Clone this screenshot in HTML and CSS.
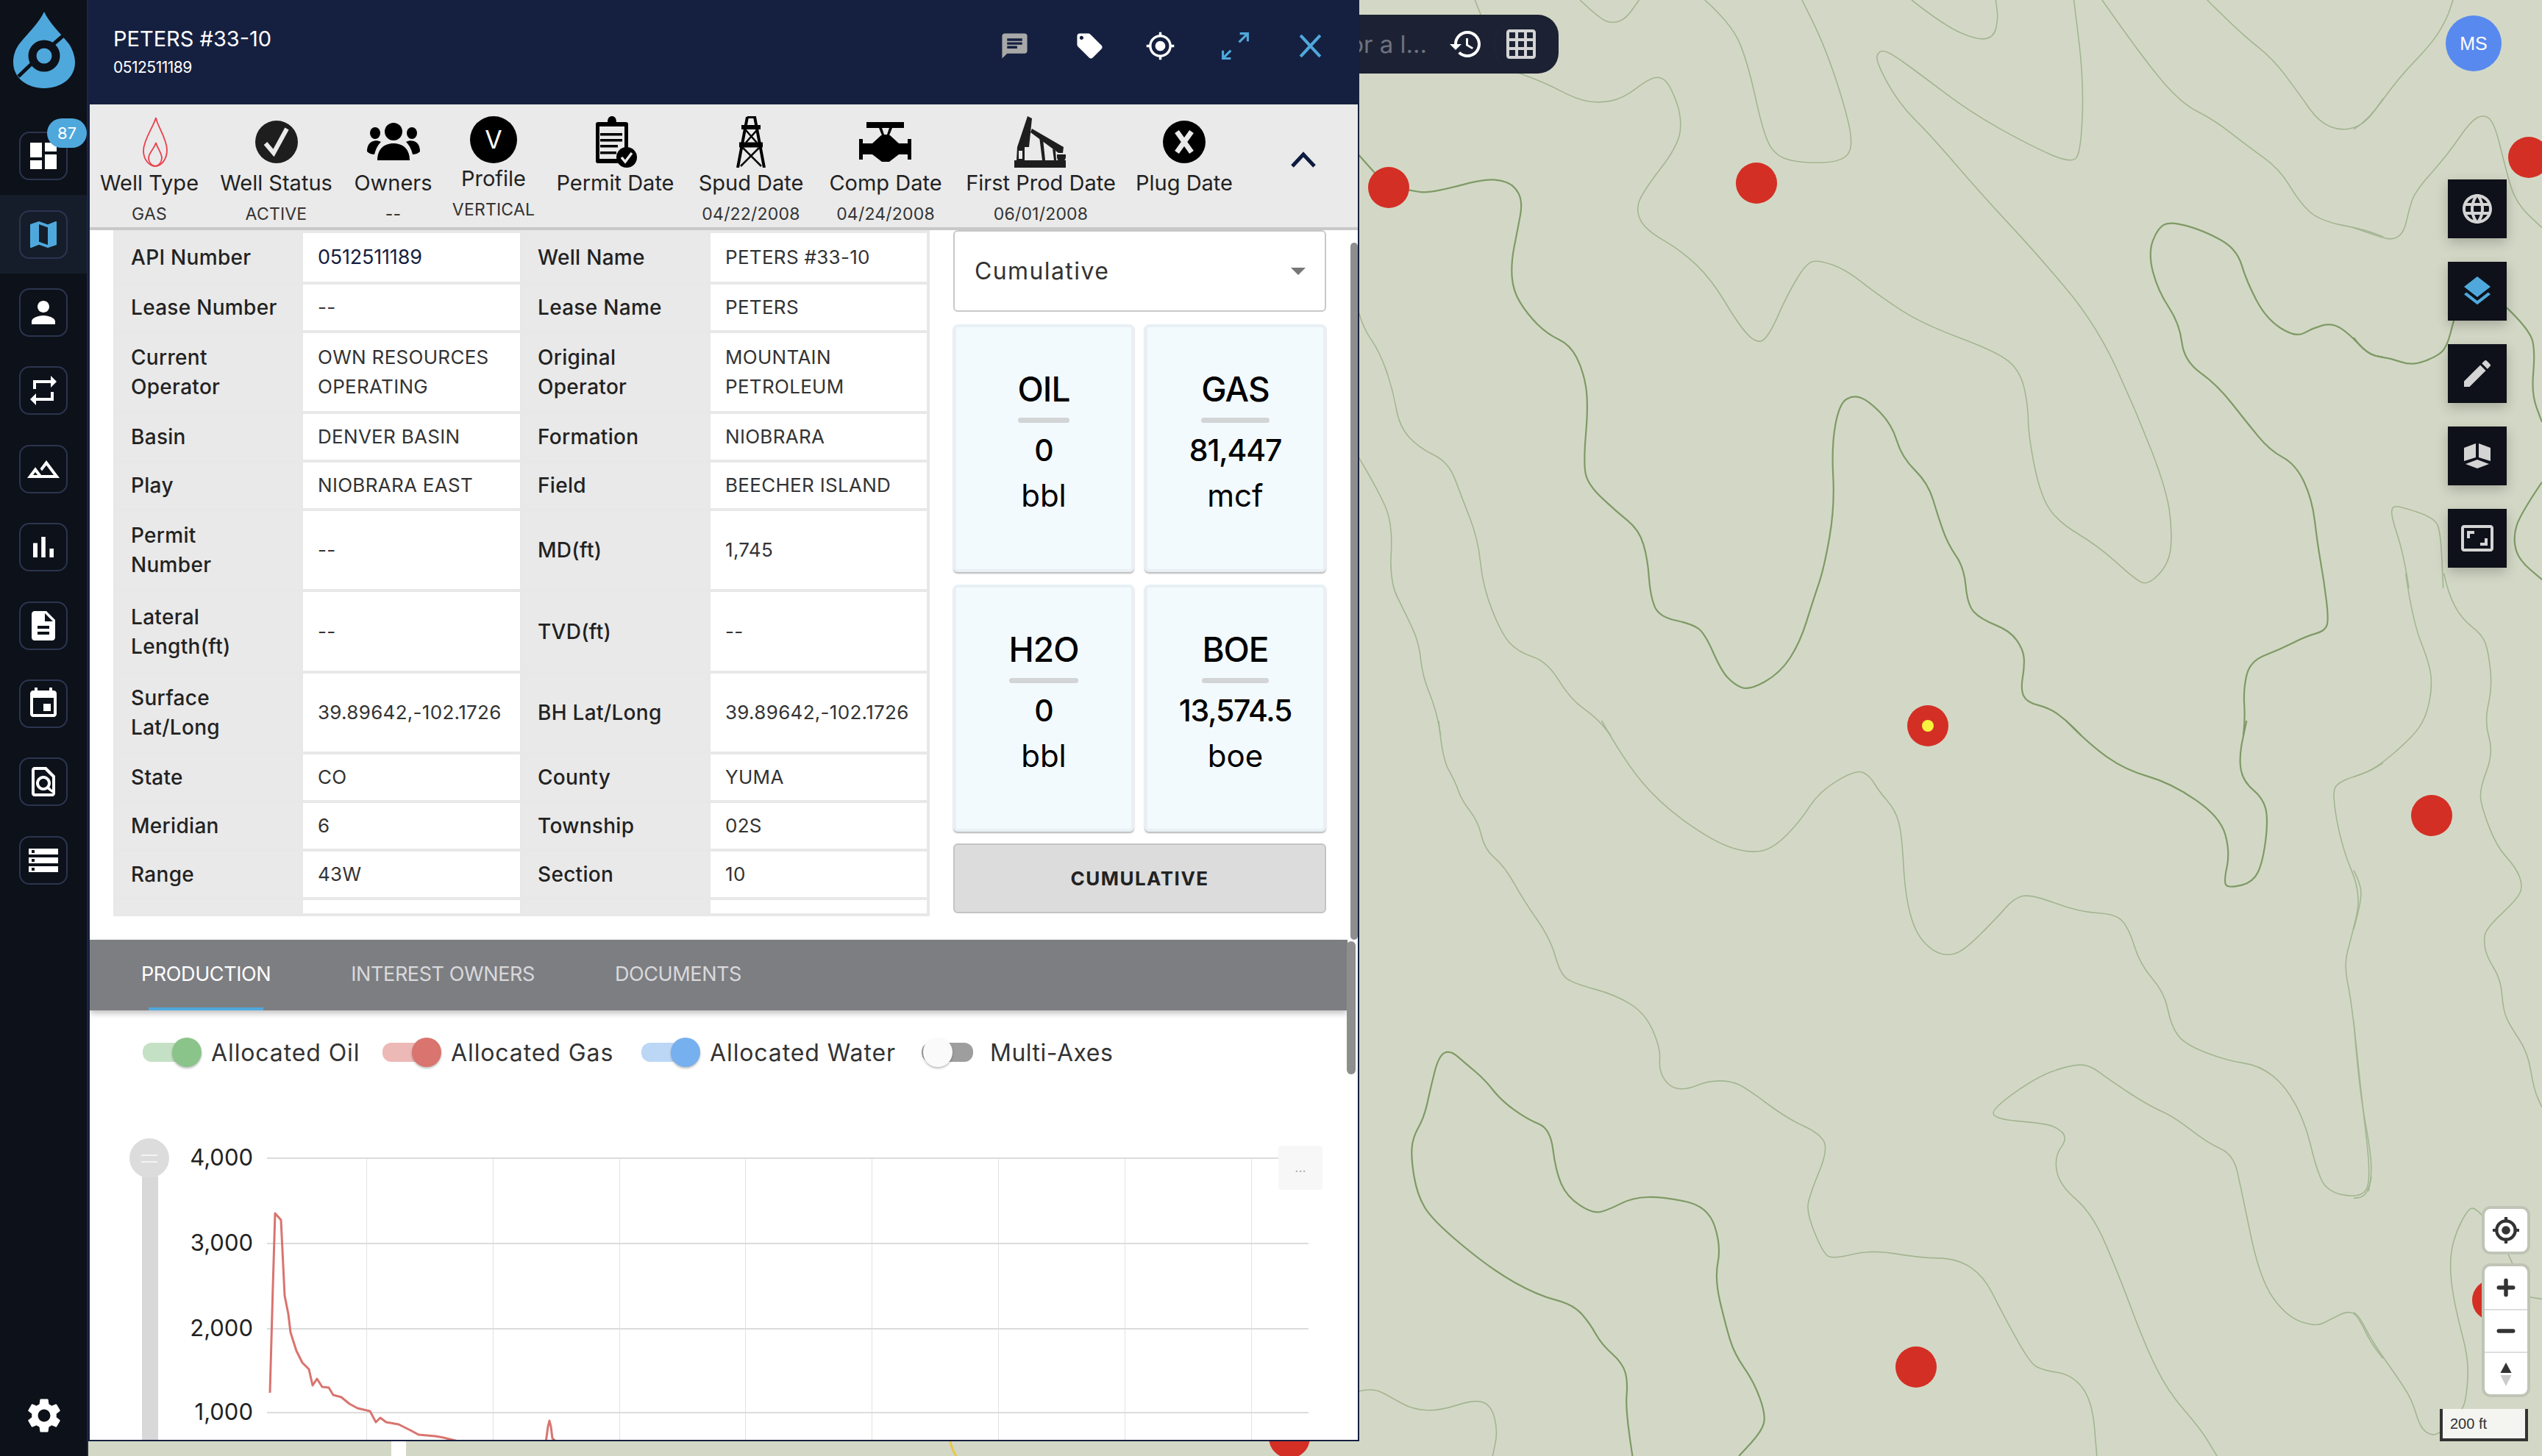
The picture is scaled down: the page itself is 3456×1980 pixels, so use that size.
FILE: index.html
```html
<!DOCTYPE html>
<html lang="en">
<head>
<meta charset="utf-8">
<title>PETERS #33-10</title>
<link rel="stylesheet" href="styles.css">
</head>
<body>
<div class="app">
  <svg class="map" viewBox="0 0 3456 1980" aria-hidden="true">
    <g transform="translate(1840,0) scale(0.8929,0.6378)">
      <polyline class="major" points="8,330 30,365 54,400 85,405 110,412 150,400 190,385 220,382 245,395 258,430 250,490 240,560 243,620 265,670 295,712 330,735 350,790 358,860 350,990 358,1035 400,1090 435,1130 448,1190 452,1270 465,1315 515,1330 535,1350 560,1430 580,1460 603,1472 650,1435 680,1370 700,1280 717,1210 733,1080 728,950 740,860 762,842 785,855 820,905 835,975 875,1030 890,1100 905,1160 930,1210 935,1290 955,1320 1000,1345 1020,1385 1022,1420 1016,1470 1025,1497 1060,1510 1085,1535 1108,1568"/>
      <polyline class="major" points="1355,1568 1358,1535 1355,1470 1365,1410 1410,1385 1450,1357 1480,1345 1485,1320 1478,1240 1468,1160 1460,1065 1435,990 1395,960 1360,900 1315,820 1265,770 1258,690 1225,620 1210,540 1225,485 1245,472 1295,492 1345,530 1360,600 1390,680 1435,720 1460,700 1490,688 1515,710 1545,755 1568,762"/>
      <polyline class="minor" points="8,665 15,700 40,750 60,830 70,910 100,955 145,985 165,1060 190,1150 197,1250 225,1350 250,1390 295,1410 330,1490 370,1530 392,1568"/>
      <polyline class="minor" points="8,975 40,1050 60,1120 55,1240 80,1310 100,1370 105,1440 125,1510 133,1568"/>
      <polyline class="minor" points="250,155 290,175 340,212 375,220 410,210 450,168 470,163 485,190 500,250 495,310 440,410 430,450 445,490 500,535 545,595 590,700 617,735 635,710 660,630 690,560 710,555 750,575 800,630 865,690 980,750 1015,790 1027,860 1028,930 1045,1050 1070,1110 1135,1165 1190,1235 1210,1248 1240,1205 1247,1150 1240,1050 1190,870 1130,690 1040,540 960,420 880,290 830,220 795,130 800,108 815,110 860,155 940,240 1030,310 1095,350 1108,320 1112,170 1097,0"/>
      <polyline class="minor" points="535,0 575,50 600,130 625,290 645,335 685,348 745,345 762,310 745,210 715,90 683,0"/>
      <polyline class="minor" points="345,0 375,40 395,50 415,40 435,0"/>
      <polyline class="minor" points="850,0 900,55 950,85 975,80 982,40 978,0"/>
      <polyline class="minor" points="185,0 195,35"/>
      <polyline class="minor" points="1140,0 1200,120 1260,220 1310,255 1360,310 1410,360 1440,430 1470,470 1540,490 1568,505"/>
      <polyline class="minor" points="1300,0 1350,70 1400,125 1440,200 1470,260 1505,280 1540,265 1568,210"/>
    </g>
    <g transform="translate(1840,980) scale(0.8929,0.6378)">
      <polyline class="major" points="1085,0 1120,50 1175,105 1245,133 1320,205 1335,280 1325,345 1333,357 1370,345 1385,300 1393,210 1385,165 1355,130 1348,80 1360,0"/>
      <polyline class="major" points="425,1568 414,1470 418,1410 410,1370 378,1330 360,1285 335,1245 280,1225 210,1170 120,1065 97,1010 88,935 90,890 108,845 118,780 130,715 147,702 170,730 200,765 225,810 265,850 300,870 308,960 325,1015 365,1052 390,1042 425,1017 470,1015 540,1035 560,1120 550,1190 567,1290 580,1350 610,1410 628,1480 622,1515 587,1568"/>
      <polyline class="minor" points="8,1430 30,1422 60,1445 90,1468 130,1472 185,1447 210,1460 220,1515 212,1568"/>
      <polyline class="minor" points="130,0 135,80 155,130 165,170 190,215 200,275 230,310 260,385 300,465 315,540 335,560 400,585 445,625 468,700 465,745 480,780 505,788 540,768 575,768 600,785 660,848 710,880 723,915 695,1010 690,1050 715,1135 730,1148 790,1128 860,1145 920,1147 960,1185 985,1255 1030,1370 1050,1385 1095,1395 1125,1450 1132,1568"/>
      <polyline class="minor" points="378,0 410,80 465,175 550,260 605,283 640,272 680,215 710,150 765,105 785,115 800,150 825,190 835,240 840,370 855,450 880,490 905,502 930,490 980,420 1005,380 1030,369 1105,408 1160,412 1180,440 1198,520 1235,580 1245,650 1265,690 1330,725 1380,735 1420,780 1450,860 1465,950 1482,1005 1535,1018 1550,980 1535,800 1520,600 1508,520 1520,460 1535,370 1505,270 1490,155 1500,130 1545,110 1568,90"/>
      <polyline class="minor" points="1568,1360 1550,1330 1530,1270 1515,1258 1490,1275 1465,1293 1420,1270 1380,1190 1352,1000 1340,925 1300,900 1250,845 1210,820 1150,765 1120,733 1090,735 1040,760 970,830 980,850 1040,857 1070,865 1088,890 1067,930 1075,990 1125,1050 1165,1180 1205,1330 1240,1430 1290,1510 1315,1568"/>
    </g>
    <g transform="translate(3200,0) scale(0.3333,0.5102)">
      <polyline class="minor" points="0,345 60,320 180,210 320,115 380,50 405,0"/>
      <polyline class="minor" points="0,607 100,630 160,640 205,620 225,560 250,510 380,415 480,320 535,305 575,330 620,450 660,540 768,607"/>
      <polyline class="major" points="0,900 50,945 150,955 240,975 340,950 380,925 410,850"/>
      <polyline class="major" points="624,820 720,880 740,940 725,1050 768,1125"/>
      <polyline class="major" points="768,1285 680,1370 650,1430 670,1490 768,1545"/>
      <polyline class="minor" points="225,1568 205,1480 155,1380 155,1350 190,1350 330,1380 355,1420 365,1568"/>
    </g>
    <g transform="translate(3200,780) scale(0.3333,0.5357)">
      <polyline class="minor" points="212,0 240,120 310,230 320,290 295,365 240,415 90,495 0,516"/>
      <polyline class="minor" points="368,0 385,50 440,115 525,155 550,200 565,290 533,375 570,455 515,545 520,590 582,692 660,745 690,790 670,825 540,900 530,935 545,975 600,1030 610,1110 640,1150 710,1215 735,1310 768,1355"/>
      <polyline class="minor" points="0,753 30,790 30,830 0,903"/>
      <polyline class="minor" points="0,1135 20,1300 70,1470 72,1530 60,1568"/>
    </g>
    <g transform="translate(3200,1600) scale(0.3333,0.3333)">
      <polyline class="minor" points="0,88 40,88 65,40 72,0"/>
      <polyline class="minor" points="530,165 495,125 465,135 420,220 395,310 395,420 420,560 470,750 460,900 440,960 350,1050 310,1055 270,1020 240,920 200,850 80,680 25,575 0,553"/>
      <polyline class="minor" points="625,305 652,365"/>
      <polyline class="minor" points="708,490 768,500"/>
    </g>
    <line class="road" x1="542" y1="1950" x2="542" y2="1980"/>
    <path class="yellow" d="M1290 1950 q2 18 10 30"/>
    <circle class="well" cx="1888" cy="255" r="28"/>
    <circle class="well" cx="2388" cy="249" r="28"/>
    <circle class="well" cx="2621" cy="987" r="28"/>
    <circle class="hit" cx="2621" cy="987" r="8"/>
    <circle class="well" cx="3306" cy="1109" r="28"/>
    <circle class="well" cx="2605" cy="1859" r="28"/>
    <circle class="well" cx="3438" cy="214" r="28"/>
    <circle class="well" cx="3389" cy="1768" r="28"/>
    <circle class="well" cx="1753" cy="1955" r="28"/>
  </svg>

  <div class="search">
    <span class="search-text">Search for a l...</span>
    <svg class="si" viewBox="0 0 24 24" fill="#fff"><path d="M13 3c-4.970 0-9 4.030-9 9H1l3.890 3.890.070.140L9 12H6c0-3.870 3.130-7 7-7s7 3.130 7 7-3.130 7-7 7c-1.930 0-3.680-.790-4.940-2.060l-1.420 1.420C8.270 19.990 10.510 21 13 21c4.970 0 9-4.030 9-9s-4.030-9-9-9zm-1 5v5l4.280 2.540.720-1.210-3.500-2.080V8H12z"/></svg>
    <span class="search-end"><svg class="si" viewBox="0 0 24 24" fill="#d4d4d4"><path d="M20 2H4c-1.100 0-2 .900-2 2v16c0 1.100.900 2 2 2h16c1.100 0 2-.900 2-2V4c0-1.100-.900-2-2-2zM8 20H4v-4h4v4zm0-6H4v-4h4v4zm0-6H4V4h4v4zm6 12h-4v-4h4v4zm0-6h-4v-4h4v4zm0-6h-4V4h4v4zm6 12h-4v-4h4v4zm0-6h-4v-4h4v4zm0-6h-4V4h4v4z"/></svg></span>
  </div>

  <nav class="sidebar">
    <div class="logo">
      <svg viewBox="0 0 84 104" width="84" height="104" aria-hidden="true">
        <path fill="#4fa8dc" d="M42 0C49 15 62 27 76 44C81 52 84 61 84 69C84 90 65 104 42 104C19 104 0 90 0 69C0 59 3 51 8 44C22 27 35 15 42 0Z"/>
        <path fill="none" stroke="#0d1119" stroke-width="5" d="M7 88L34 62M50 48L80 22"/>
        <circle cx="42" cy="60" r="16" fill="#4fa8dc" stroke="#0d1119" stroke-width="11"/>
      </svg>
    </div>
    <div class="nav-list">
      <div class="nav-row"><span class="nav-btn"><span class="badge">87</span><svg viewBox="0 0 24 24"><path d="M3 13h8V3H3v10zm0 8h8v-6H3v6zm10 0h8V11h-8v10zm0-18v6h8V3h-8z"/></svg></span></div>
      <div class="nav-row nav-active"><span class="nav-btn"><svg viewBox="0 0 24 24"><path d="M20.5 3l-.16.03L15 5.1 9 3 3.36 4.9c-.21.07-.36.25-.36.48V20.5c0 .28.22.5.5.5l.16-.03L9 18.9l6 2.1 5.64-1.9c.21-.07.36-.25.36-.48V3.5c0-.28-.22-.5-.5-.5zM15 19l-6-2.11V5l6 2.11V19z"/></svg></span></div>
      <div class="nav-row"><span class="nav-btn"><svg viewBox="0 0 24 24"><path d="M12 12c2.21 0 4-1.79 4-4s-1.79-4-4-4-4 1.79-4 4 1.79 4 4 4zm0 2c-2.67 0-8 1.34-8 4v2h16v-2c0-2.66-5.33-4-8-4z"/></svg></span></div>
      <div class="nav-row"><span class="nav-btn"><svg viewBox="0 0 24 24"><path d="M7 7h10v3l4-4-4-4v3H5v6h2V7zm10 10H7v-3l-4 4 4 4v-3h12v-6h-2v4z"/></svg></span></div>
      <div class="nav-row"><span class="nav-btn"><svg viewBox="0 0 24 24"><path d="M14 6l-4.22 5.63 1.25 1.67L14 9.33 19 16h-8.46l-4.01-5.37L1 18h22L14 6zM5 16l1.52-2.03L8.04 16H5z"/></svg></span></div>
      <div class="nav-row"><span class="nav-btn"><svg viewBox="0 0 24 24"><path d="M5 9.2h3V19H5zM10.6 5h2.8v14h-2.8zm5.6 8H19v6h-2.8z"/></svg></span></div>
      <div class="nav-row"><span class="nav-btn"><svg viewBox="0 0 24 24"><path d="M14 2H6c-1.1 0-1.99.9-1.99 2L4 20c0 1.1.89 2 1.99 2H18c1.1 0 2-.9 2-2V8l-6-6zm2 16H8v-2h8v2zm0-4H8v-2h8v2zm-3-5V3.5L18.5 9H13z"/></svg></span></div>
      <div class="nav-row"><span class="nav-btn"><svg viewBox="0 0 24 24"><path d="M17 12h-5v5h5v-5zM16 1v2H8V1H6v2H5c-1.11 0-1.99.9-1.99 2L3 19c0 1.1.89 2 2 2h14c1.1 0 2-.9 2-2V5c0-1.1-.9-2-2-2h-1V1h-2zm3 18H5V8h14v11z"/></svg></span></div>
      <div class="nav-row"><span class="nav-btn"><svg viewBox="0 0 24 24"><path d="M14 2H6c-1.1 0-1.99.9-1.99 2L4 20c0 1.1.89 2 1.99 2H18c1.1 0 2-.9 2-2V8l-6-6zM6 4h7l5 5v8.58l-1.84-1.84c1.28-1.94 1.07-4.57-.64-6.28C14.55 8.49 13.28 8 12 8c-1.28 0-2.55.49-3.53 1.46-1.95 1.95-1.95 5.11 0 7.05.97.97 2.25 1.46 3.53 1.46.97 0 1.94-.28 2.78-.83L18.6 20H6V4zm8.11 11.1c-.56.56-1.31.88-2.11.88s-1.55-.31-2.11-.88c-.56-.56-.88-1.31-.88-2.11s.31-1.55.88-2.11c.56-.57 1.31-.88 2.11-.88s1.55.31 2.11.88c.56.56.88 1.31.88 2.11s-.31 1.55-.88 2.11z"/></svg></span></div>
      <div class="nav-row"><span class="nav-btn"><svg viewBox="0 0 24 24"><path d="M2 20h20v-4H2v4zm2-3h2v2H4v-2zM2 4v4h20V4H2zm4 3H4V5h2v2zm-4 7h20v-4H2v4zm2-3h2v2H4v-2z"/></svg></span></div>
    </div>
    <div class="settings">
      <svg viewBox="0 0 24 24"><path d="M19.14 12.94c.04-.3.06-.61.06-.94 0-.32-.02-.64-.07-.94l2.03-1.58c.18-.14.23-.41.12-.61l-1.92-3.32c-.12-.22-.37-.29-.59-.22l-2.39.96c-.5-.38-1.03-.7-1.62-.94l-.36-2.54c-.04-.24-.24-.41-.48-.41h-3.84c-.24 0-.43.17-.47.41l-.36 2.54c-.59.24-1.13.57-1.62.94l-2.39-.96c-.22-.08-.47 0-.59.22L2.74 8.87c-.12.21-.08.47.12.61l2.03 1.58c-.05.3-.09.63-.09.94s.02.64.07.94l-2.03 1.58c-.18.14-.23.41-.12.61l1.92 3.32c.12.22.37.29.59.22l2.39-.96c.5.38 1.03.7 1.62.94l.36 2.54c.05.24.24.41.48.41h3.84c.24 0 .44-.17.47-.41l.36-2.54c.59-.24 1.13-.56 1.62-.94l2.39.96c.22.08.47 0 .59-.22l1.92-3.32c.12-.22.07-.47-.12-.61l-2.01-1.58zM12 15.6c-1.98 0-3.6-1.62-3.6-3.6s1.62-3.6 3.6-3.6 3.6 1.62 3.6 3.6-1.62 3.6-3.6 3.6z"/></svg>
    </div>
  </nav>

  <main class="panel">
    <header class="head">
      <div class="head-title">
        <div class="head-name">PETERS #33-10</div>
        <div class="head-api">0512511189</div>
      </div>
      <div class="head-icons">
        <svg class="hi" viewBox="0 0 24 24" fill="#a8a8a8"><path d="M20 2H4c-1.1 0-1.99.9-1.99 2L2 22l4-4h14c1.1 0 2-.9 2-2V4c0-1.1-.9-2-2-2zM6 9h12v2H6V9zm8 5H6v-2h8v2zm4-6H6V6h12v2z"/></svg>
        <svg class="hi hi-tag" viewBox="0 0 24 24" fill="#fff"><path d="M21.41 11.58l-9-9C12.05 2.22 11.55 2 11 2H4c-1.1 0-2 .9-2 2v7c0 .55.22 1.05.59 1.42l9 9c.36.36.86.58 1.41.58.55 0 1.05-.22 1.41-.59l7-7c.37-.36.59-.86.59-1.41 0-.55-.23-1.06-.59-1.42zM5.5 7C4.67 7 4 6.33 4 5.5S4.67 4 5.5 4 7 4.67 7 5.5 6.33 7 5.5 7z"/></svg>
        <svg class="hi" viewBox="0 0 24 24" fill="#fff"><path d="M12 8c-2.21 0-4 1.79-4 4s1.79 4 4 4 4-1.79 4-4-1.79-4-4-4zm8.94 3c-.46-4.17-3.77-7.48-7.94-7.94V1h-2v2.06C6.83 3.52 3.52 6.83 3.06 11H1v2h2.06c.46 4.17 3.77 7.48 7.94 7.94V23h2v-2.06c4.17-.46 7.48-3.77 7.94-7.94H23v-2h-2.06zM12 19c-3.87 0-7-3.13-7-7s3.13-7 7-7 7 3.13 7 7-3.13 7-7 7z"/></svg>
        <svg class="hi" viewBox="0 0 40 40" fill="none" stroke="#4fa8dc" stroke-width="3"><path d="M25 15L36 4M14 26L4 36M26 3.500H36.500V14M3.500 26V36.500H14"/></svg>
        <svg class="hi" viewBox="0 0 40 40" fill="none" stroke="#4fa8dc" stroke-width="4"><path d="M7 6L33 34M33 6L7 34"/></svg>
      </div>
    </header>

    <section class="tools">
      <div class="tool">
        <svg class="ti ti-flame" viewBox="0 0 40 70" fill="none" stroke="#e8404c" stroke-width="1.800"><path d="M21 2C22 12 36 30 36 46C36 59 28 68 20 68C12 68 4 59 4 47C4 32 18 14 21 2Z"/><path d="M21 36C22 42 29 50 29 57C29 63 24 68 20 68C16 68 11 63 11 57C11 50 19 44 21 36Z"/></svg>
        <div class="tl">Well Type</div><div class="ts">GAS</div>
      </div>
      <div class="tool">
        <svg class="ti" viewBox="0 0 60 70"><circle cx="30" cy="35" r="29" fill="#1e1e1e"/><path d="M15 37L26 50L44 17" fill="none" stroke="#eaeaea" stroke-width="6"/></svg>
        <div class="tl">Well Status</div><div class="ts">ACTIVE</div>
      </div>
      <div class="tool">
        <svg class="ti" viewBox="0 0 72 70" fill="#000"><circle cx="36" cy="21" r="12"/><ellipse cx="11" cy="23" rx="7" ry="8"/><ellipse cx="61" cy="23" rx="7" ry="8"/><path d="M14 60C14 46 22 37 36 37C50 37 58 46 58 60Z"/><path d="M8 34C2 36 0 42 0 48C3 51 7 52 10 52C12 44 15 39 19 35C15 33 12 33 8 34ZM64 34C70 36 72 42 72 48C69 51 65 52 62 52C60 44 57 39 53 35C57 33 60 33 64 34Z"/></svg>
        <div class="tl">Owners</div><div class="ts">--</div>
      </div>
      <div class="tool">
        <div class="ti-profile">V</div>
        <div class="tl">Profile</div><div class="ts">VERTICAL</div>
      </div>
      <div class="tool">
        <svg class="ti" viewBox="0 0 60 70"><path d="M6 8H19C19 2 22 0 25 0C28 0 31 2 31 8H44C46 8 47 9 47 11V44C40 46 36 52 36 64H6C4 64 3 63 3 61V11C3 9 4 8 6 8Z" fill="#000"/><rect x="8" y="14" width="34" height="44" fill="#eaeaea"/><rect x="9" y="23" width="30" height="3.500" fill="#000"/><rect x="9" y="31" width="30" height="3.500" fill="#000"/><rect x="9" y="39" width="24" height="3.500" fill="#000"/><rect x="9" y="48" width="22" height="3.500" fill="#000"/><circle cx="45" cy="56" r="14" fill="#000"/><path d="M38 56L43 62L52 50" fill="none" stroke="#eaeaea" stroke-width="3.500"/></svg>
        <div class="tl">Permit Date</div><div class="ts">&nbsp;</div>
      </div>
      <div class="tool">
        <svg class="ti" viewBox="0 0 42 70" fill="none" stroke="#000"><path d="M16 1H26L39 70M16 1L3 70" stroke-width="4"/><path d="M8 15H34" stroke-width="6"/><path d="M5 39H37" stroke-width="7"/><path d="M14 19L29 36M29 19L14 36M10 43L35 68M32 43L7 68" stroke-width="2.500"/></svg>
        <div class="tl">Spud Date</div><div class="ts">04/22/2008</div>
      </div>
      <div class="tool">
        <svg class="ti" viewBox="0 0 72 70" fill="#000"><rect x="10" y="8" width="51" height="8"/><path d="M27 16H31L34 25H38L41 16H45L41 26H42L54 37H62V52H54L41 62H31L18 52H10V37H18L30 26H31Z"/><rect x="0" y="31" width="5" height="28"/><rect x="66" y="31" width="5" height="28"/><rect x="4" y="37" width="8" height="15"/><rect x="60" y="37" width="8" height="15"/></svg>
        <div class="tl">Comp Date</div><div class="ts">04/24/2008</div>
      </div>
      <div class="tool">
        <svg class="ti" viewBox="0 0 72 70" fill="#1e1e1e"><rect x="0" y="60" width="70" height="10"/><path d="M18 0L24 3L20 42L4 42Z"/><path d="M22 22L60 50L66 50L67 42L24 17Z"/><path d="M34 28L38 60H42L39 31ZM52 44L54 60H57L56 47Z" /><path d="M4 42L3 60H14V42ZM6 47V58H11V47Z" fill-rule="evenodd"/><path d="M58 52H70V55C70 60 66 62 64 62C61 62 58 60 58 55Z"/></svg>
        <div class="tl">First Prod Date</div><div class="ts">06/01/2008</div>
      </div>
      <div class="tool">
        <svg class="ti" viewBox="0 0 60 70"><circle cx="30" cy="35" r="29" fill="#000"/><path d="M20 21L40 49M40 21L20 49" stroke="#eaeaea" stroke-width="7" fill="none"/></svg>
        <div class="tl">Plug Date</div><div class="ts">&nbsp;</div>
      </div>
      <svg class="chev" viewBox="0 0 34 22" fill="none" stroke="#0d1b3e" stroke-width="5"><path d="M2 20L17 4L32 20"/></svg>
    </section>

    <section class="info">
      <div class="grid">
        <div class="k">API Number</div><div class="v v-link">0512511189</div><div class="k">Well Name</div><div class="v">PETERS #33-10</div>
        <div class="k">Lease Number</div><div class="v">--</div><div class="k">Lease Name</div><div class="v">PETERS</div>
        <div class="k">Current<br>Operator</div><div class="v">OWN RESOURCES<br>OPERATING</div><div class="k">Original<br>Operator</div><div class="v">MOUNTAIN<br>PETROLEUM</div>
        <div class="k">Basin</div><div class="v">DENVER BASIN</div><div class="k">Formation</div><div class="v">NIOBRARA</div>
        <div class="k">Play</div><div class="v">NIOBRARA EAST</div><div class="k">Field</div><div class="v">BEECHER ISLAND</div>
        <div class="k">Permit<br>Number</div><div class="v">--</div><div class="k">MD(ft)</div><div class="v">1,745</div>
        <div class="k">Lateral<br>Length(ft)</div><div class="v">--</div><div class="k">TVD(ft)</div><div class="v">--</div>
        <div class="k">Surface<br>Lat/Long</div><div class="v">39.89642,-102.1726</div><div class="k">BH Lat/Long</div><div class="v">39.89642,-102.1726</div>
        <div class="k">State</div><div class="v">CO</div><div class="k">County</div><div class="v">YUMA</div>
        <div class="k">Meridian</div><div class="v">6</div><div class="k">Township</div><div class="v">02S</div>
        <div class="k">Range</div><div class="v">43W</div><div class="k">Section</div><div class="v">10</div>
        <div class="k"></div><div class="v"></div><div class="k"></div><div class="v"></div>
      </div>
      <aside class="side">
        <div class="select"><span>Cumulative</span><i class="caret"></i></div>
        <div class="cards">
          <div class="card"><div class="c-t">OIL</div><div class="c-v">0</div><div class="c-u">bbl</div></div>
          <div class="card"><div class="c-t">GAS</div><div class="c-v">81,447</div><div class="c-u">mcf</div></div>
          <div class="card"><div class="c-t">H2O</div><div class="c-v">0</div><div class="c-u">bbl</div></div>
          <div class="card"><div class="c-t">BOE</div><div class="c-v">13,574.5</div><div class="c-u">boe</div></div>
        </div>
        <div class="cum-btn">CUMULATIVE</div>
      </aside>
      <div class="thumb thumb-a"></div>
    </section>

    <section class="lower">
      <div class="tabs">
        <span class="tab tab-on">PRODUCTION</span>
        <span class="tab">INTEREST OWNERS</span>
        <span class="tab">DOCUMENTS</span>
      </div>
      <div class="thumb thumb-b"></div>
      <div class="toggles">
        <div class="tg tg-oil"><span class="track"><i class="knob"></i></span><span>Allocated Oil</span></div>
        <div class="tg tg-gas"><span class="track"><i class="knob"></i></span><span>Allocated Gas</span></div>
        <div class="tg tg-wat"><span class="track"><i class="knob"></i></span><span>Allocated Water</span></div>
        <div class="tg tg-off"><span class="track"><i class="knob"></i></span><span>Multi-Axes</span></div>
      </div>
      <svg class="chart" viewBox="122 1540 1724 420">
        <g class="gv"><line x1="498.500" y1="1575" x2="498.500" y2="1960"/><line x1="670.500" y1="1575" x2="670.500" y2="1960"/><line x1="842.500" y1="1575" x2="842.500" y2="1960"/><line x1="1013.500" y1="1575" x2="1013.500" y2="1960"/><line x1="1185.500" y1="1575" x2="1185.500" y2="1960"/><line x1="1357.500" y1="1575" x2="1357.500" y2="1960"/><line x1="1529.500" y1="1575" x2="1529.500" y2="1960"/><line x1="1701.500" y1="1575" x2="1701.500" y2="1960"/></g>
        <g class="gh"><line x1="363" y1="1575" x2="1779" y2="1575"/><line x1="363" y1="1691" x2="1779" y2="1691"/><line x1="363" y1="1807" x2="1779" y2="1807"/><line x1="363" y1="1921" x2="1779" y2="1921"/></g>
        <g class="ylab"><text x="344" y="1585">4,000</text><text x="344" y="1701">3,000</text><text x="344" y="1817">2,000</text><text x="344" y="1931">1,000</text></g>
        <rect x="193" y="1600" width="22" height="360" fill="#d8d8d8"/>
        <circle cx="203" cy="1575" r="27" fill="#dcdcdc"/>
        <path d="M192 1571H214M192 1580H214" stroke="#f4f4f4" stroke-width="2"/>
        <rect x="1738" y="1558" width="60" height="60" rx="4" fill="#f7f7f7"/>
        <text x="1768" y="1594" class="dots">...</text>
        <polyline class="series" points="367,1894 371,1750 374,1650 382,1659 387,1762 392,1787 395,1812 403,1837 411,1853 420,1862 425,1884 431,1875 438,1886 447,1887 453,1897 464,1900 475,1909 486,1915 503,1919 511,1934 517,1928 525,1934 542,1937 558,1945 569,1951 592,1953 603,1955 619,1959 633,1962"/>
        <polyline class="series" points="742,1962 745,1940 747,1932 749,1940 751,1956 758,1962"/>
      </svg>
    </section>
  </main>

  <div class="avatar">MS</div>

  <div class="map-tools">
    <div class="mt"><svg viewBox="0 0 24 24"><path d="M11.990 2C6.470 2 2 6.480 2 12s4.470 10 9.990 10C17.520 22 22 17.520 22 12S17.520 2 11.990 2zm6.930 6h-2.950c-.320-1.250-.780-2.450-1.380-3.560 1.840.630 3.370 1.910 4.330 3.560zM12 4.040c.830 1.200 1.480 2.530 1.910 3.960h-3.820c.430-1.430 1.080-2.760 1.910-3.960zM4.260 14C4.100 13.360 4 12.690 4 12s.100-1.360.260-2h3.380c-.080.660-.140 1.320-.140 2 0 .680.060 1.340.140 2H4.260zm.820 2h2.950c.320 1.250.780 2.450 1.380 3.560-1.840-.630-3.370-1.900-4.330-3.560zm2.950-8H5.080c.960-1.660 2.490-2.930 4.330-3.560C8.810 5.550 8.350 6.750 8.030 8zM12 19.960c-.830-1.200-1.480-2.530-1.910-3.960h3.820c-.430 1.430-1.080 2.760-1.910 3.960zM14.340 14H9.660c-.090-.660-.160-1.320-.160-2 0-.680.070-1.350.160-2h4.680c.090.650.160 1.320.160 2 0 .680-.070 1.340-.160 2zm.250 5.560c.600-1.110 1.060-2.310 1.380-3.560h2.950c-.960 1.650-2.490 2.930-4.330 3.560zM16.360 14c.080-.660.140-1.320.140-2 0-.680-.060-1.340-.140-2h3.380c.160.640.260 1.310.260 2s-.100 1.360-.260 2h-3.380z"/></svg></div>
    <div class="mt mt-on"><svg viewBox="0 0 24 24"><path d="M11.990 18.540l-7.370-5.730L3 14.070l9 7 9-7-1.630-1.270-7.380 5.740zM12 16l7.360-5.730L21 9l-9-7-9 7 1.630 1.270L12 16z"/></svg></div>
    <div class="mt"><svg viewBox="0 0 24 24"><path d="M3 17.250V21h3.750L17.810 9.940l-3.750-3.750L3 17.250zM20.710 7.040c.390-.390.390-1.020 0-1.410l-2.340-2.340c-.390-.390-1.020-.390-1.410 0l-1.830 1.830 3.750 3.750 1.830-1.830z"/></svg></div>
    <div class="mt"><svg viewBox="0 0 24 24"><path d="M3 6.500L11 3.500V13L3 15.500zM13 3.500L21 6.500V15.500L13 13zM12 14.500L20 17.500L12 20.500L4 17.500z"/></svg></div>
    <div class="mt"><svg viewBox="0 0 24 24"><path d="M19 12h-2v3h-3v2h5v-5zM7 9h3V7H5v5h2V9zm14-6H3c-1.100 0-2 .900-2 2v14c0 1.100.900 2 2 2h18c1.100 0 2-.900 2-2V5c0-1.100-.900-2-2-2zm0 16.010H3V4.990h18v14.020z"/></svg></div>
  </div>

  <div class="map-ctl">
    <div class="ctl-box">
      <div class="ctl ctl-geo"><svg viewBox="0 0 34 34" fill="none" stroke="#333"><circle cx="17" cy="17" r="12" stroke-width="4"/><circle cx="17" cy="17" r="5.500" fill="#333" stroke="none"/><path d="M17 1V5M17 29V33M1 17H5M29 17H33" stroke-width="4" stroke-linecap="round"/></svg></div>
    </div>
    <div class="ctl-box">
      <div class="ctl"><svg viewBox="0 0 24 24" fill="none" stroke="#333" stroke-width="5" stroke-linecap="round"><path d="M12 3V21M3 12H21"/></svg></div>
      <div class="ctl"><svg viewBox="0 0 24 24" fill="none" stroke="#333" stroke-width="5" stroke-linecap="round"><path d="M3 12H21"/></svg></div>
      <div class="ctl"><svg viewBox="0 0 24 36"><path d="M12 2L20 17H4Z" fill="#333"/><path d="M12 36L20 20H4Z" fill="#ccc"/></svg></div>
    </div>
  </div>

  <div class="scale">200 ft</div>
</div>
<script src="map.js"></script>
</body>
</html>
```

FILE: styles.css
```css
* { box-sizing: border-box; }
html, body { margin: 0; padding: 0; }
body { font-family: Inter, "Noto Sans", sans-serif; color: #222; }

.app { position: relative; display: flex; width: 3456px; height: 1980px; overflow: hidden; background: #d3d8c6; }

.map { position: absolute; inset: 0; width: 3456px; height: 1980px; }
.major, .minor { fill: none; stroke-linejoin: round; vector-effect: non-scaling-stroke; }
.major { stroke: #7f9a66; stroke-width: 2.200px; }
.minor { stroke: #a3b592; stroke-width: 1.600px; }
.road { stroke: #fff; stroke-width: 20px; }
.yellow { fill: none; stroke: #e8c84a; stroke-width: 3px; }
.well { fill: #d32f25; }
.hit { fill: #f8f23e; }

.sidebar { position: relative; flex: none; width: 120px; height: 1980px; background: #0d1119; border-right: 2px solid #1c2740; display: flex; flex-direction: column; }
.logo { height: 159px; padding: 16px 0 0 18px; }
.logo svg { display: block; }
.nav-list { display: flex; flex-direction: column; }
.nav-row { height: 106.400px; display: flex; align-items: center; padding-left: 26px; }
.nav-active { background: #151d2a; }
.nav-btn { position: relative; width: 66px; height: 66px; border: 2px solid #2b3550; border-radius: 14px; display: flex; align-items: center; justify-content: center; }
.nav-btn svg { width: 48px; height: 48px; fill: #fff; }
.nav-active svg { fill: #4fa8dc; }
.badge { position: absolute; left: 36px; top: -20px; width: 54px; height: 40px; border-radius: 20px; background: #4fa8dc; color: #fff; font-size: 22px; line-height: 40px; text-align: center; }
.settings { position: absolute; left: 32px; top: 1897px; width: 56px; height: 56px; }
.settings svg { width: 56px; height: 56px; fill: #fff; display: block; }

.panel { position: relative; flex: none; width: 1728px; height: 1960px; background: #fff; border: 2px solid #152040; border-top: 0; display: flex; flex-direction: column; overflow: hidden; }

.head { flex: none; height: 142px; background: #152040; color: #fff; display: flex; justify-content: space-between; padding: 0 44px 0 32px; }
.head-title { padding-top: 34px; }
.head-name { font-size: 29px; line-height: 38px; }
.head-api { font-size: 21px; line-height: 30px; margin-top: 5px; letter-spacing: -0.5px; }
.head-icons { display: flex; gap: 61px; padding-top: 42px; }
.hi { width: 41px; height: 41px; display: block; }
.hi-tag { margin-right: -6px; }

.tools { position: relative; flex: none; height: 171px; background: #eaeaea; border-bottom: 4px solid #c8c8c8; display: grid; grid-template-columns: 132px 153px 105px 108px 163px 146px 160px 202px 128px; column-gap: 30px; padding: 16px 0 0 15px; }
.tool { display: flex; flex-direction: column; align-items: center; white-space: nowrap; }
.ti { display: block; flex: none; height: 70px; width: 72px; }
.ti-flame { margin-left: 16px; }
.ti-profile { flex: none; width: 64px; height: 64px; border-radius: 50%; background: #000; color: #fff; font-size: 34px; line-height: 64px; text-align: center; }
.tl { font-size: 29px; line-height: 42px; color: #222; }
.ts { font-size: 23px; line-height: 26px; margin-top: 8px; color: #333; letter-spacing: 0.2px; }
.chev { position: absolute; left: 1633px; top: 64px; width: 34px; height: 22px; }

.info { position: relative; flex: none; height: 965px; display: flex; align-items: flex-start; gap: 32px; padding-left: 32px; }
.grid { flex: none; width: 1110px; height: 933px; overflow: hidden; background: #e8e8e8; padding: 4px 3px 4px 4px; display: grid; gap: 4px; grid-template-columns: 250px 295px 251px 294px; grid-template-rows: 66px 62px 106px 62px 62px 106px 107px 106px 62px 62px 62px 18px; }
.k, .v { display: flex; align-items: center; padding: 0 10px 0 20px; line-height: 40px; white-space: nowrap; }
.k { background: #e9e9e9; font-size: 28px; font-weight: 500; color: #222; letter-spacing: 0.3px; }
.v { background: #fff; color: #333; font-size: 26px; letter-spacing: 0.3px; }
.v-link { color: #152040; font-size: 27px; letter-spacing: -0.2px; }

.side { flex: none; width: 507px; display: flex; flex-direction: column; gap: 17px; }
.select { height: 111px; border: 2px solid #c8c8c8; border-radius: 6px; background: #fff; display: flex; align-items: center; justify-content: space-between; padding: 0 26px 0 27px; font-size: 32px; letter-spacing: 1.400px; color: #333; }
.caret { width: 0; height: 0; border-left: 10px solid transparent; border-right: 10px solid transparent; border-top: 10px solid #777; }
.cards { display: grid; grid-template-columns: 246px 247px; grid-template-rows: 337px 336px; gap: 17px 14px; }
.card { background: #f3fafd; border: 4px solid #e8f0f6; border-radius: 6px; box-shadow: 0 2px 2px rgba(0,0,0,.28); display: flex; flex-direction: column; align-items: center; padding-top: 56px; color: #000; }
.c-t { font-size: 46px; line-height: 56px; font-weight: 500; position: relative; padding-bottom: 18px; letter-spacing: -1px; }
.c-t::after { content: ""; position: absolute; left: 0; right: 0; bottom: 0; height: 7px; border-radius: 4px; background: #d2d4d5; }
.c-v { font-size: 41px; line-height: 50px; font-weight: 500; margin-top: 12px; letter-spacing: -1.200px; }
.c-u { font-size: 42px; line-height: 50px; margin-top: 12px; }
.cum-btn { height: 95px; margin-top: -1px; background: #dcdcdc; border: 2px solid #c4c4c4; border-radius: 6px; display: flex; align-items: center; justify-content: center; font-size: 26px; font-weight: 700; letter-spacing: 1.500px; color: #222; }

.thumb { position: absolute; background: #8e8e8e; border-radius: 6px; }
.thumb-a { right: 0; top: 17px; width: 10px; height: 948px; }
.thumb-b { right: 3px; top: 2px; width: 12px; height: 181px; }

.lower { position: relative; flex: 1; min-height: 0; }
.tabs { position: relative; height: 96px; margin-right: 14px; background: #7d7e82; box-shadow: 0 4px 8px rgba(0,0,0,.25); display: flex; gap: 109px; align-items: center; padding-left: 70px; }
.tab { position: relative; font-size: 27px; color: #d9d9db; height: 96px; line-height: 94px; letter-spacing: -0.4px; }
.tab-on { color: #fff; }
.tab-on::after { content: ""; position: absolute; left: 10px; right: 10px; bottom: 0; height: 4px; background: #4fa8dc; }

.toggles { height: 166px; display: flex; padding: 36px 0 0 72px; }
.tg { display: flex; align-items: center; height: 42px; font-size: 32px; letter-spacing: 0.9px; color: #333; }
.track { position: relative; display: block; width: 62px; height: 26px; border-radius: 12px; margin-right: 31px; }
.knob { position: absolute; right: -18px; top: -7px; width: 40px; height: 40px; border-radius: 50%; box-shadow: 0 2px 3px rgba(0,0,0,.25); }
.tg-oil { width: 326px; }
.tg-gas { width: 352px; }
.tg-wat { width: 381px; }
.tg-off { letter-spacing: 0.5px; }
.tg-oil .track { background: #c5e1c5; }
.tg-oil .knob { background: #8bc48a; }
.tg-gas .track { background: #ecb9b7; }
.tg-gas .knob { background: #d9746f; }
.tg-wat .track { background: #bcd7f6; }
.tg-wat .knob { background: #77b0ee; }
.tg-off .track { width: 70px; background: #9e9e9e; margin-right: 23px; }
.tg-off .knob { left: 2px; right: auto; background: #fafafa; }

.chart { display: block; width: 1724px; height: 420px; }
.gh line { stroke: #dcdcdc; stroke-width: 2px; }
.gv line { stroke: #e2e2e2; stroke-width: 1px; }
.ylab text { font-family: Inter, sans-serif; font-size: 31px; fill: #222; text-anchor: end; }
.dots { font-family: Inter, sans-serif; font-size: 18px; fill: #aaa; text-anchor: middle; }
.series { fill: none; stroke: #d9746f; stroke-width: 3px; stroke-linejoin: round; }

.search { position: absolute; left: 1600px; top: 20px; width: 519px; height: 80px; background: #1c2233; border-radius: 28px; display: flex; align-items: center; overflow: hidden; }
.search-text { flex: none; width: 340px; font-size: 33px; color: #6f7280; white-space: nowrap; text-align: right; }
.si { flex: none; width: 48px; height: 48px; }
.search > .si { margin-left: 29px; }
.search-end { flex: none; display: flex; align-items: center; height: 80px; width: 88px; margin-left: 14px; padding-left: 12px; border-left: 1px solid #232a3c; border-radius: 40px 0 0 40px; }

.avatar { position: absolute; left: 3325px; top: 21px; width: 76px; height: 76px; border-radius: 50%; background: #5789ef; color: #fff; font-family: "Liberation Sans", sans-serif; font-size: 25px; line-height: 76px; text-align: center; }

.map-tools { position: absolute; left: 3328px; top: 244px; display: flex; flex-direction: column; gap: 32px; }
.mt { width: 80px; height: 80px; background: #0e1119; box-shadow: 0 6px 16px rgba(0,0,0,.22); display: flex; align-items: center; justify-content: center; }
.mt svg { width: 48px; height: 48px; fill: #d4d4d4; }
.mt-on svg { fill: #4fa8dc; }

.map-ctl { position: absolute; left: 3374px; top: 1640px; display: flex; flex-direction: column; gap: 12px; }
.ctl-box { width: 66px; border: 4px solid #c0c4b6; border-radius: 12px; background: #fff; overflow: hidden; }
.ctl { height: 58px; display: flex; align-items: center; justify-content: center; border-top: 2px solid #ddd; }
.ctl:first-child { border-top: 0; }
.ctl svg { width: 26px; height: 34px; }
.ctl-geo svg { width: 36px; height: 36px; }
.scale { position: absolute; left: 3317px; top: 1916px; width: 120px; height: 44px; background: #f4f5f0; border: 4px solid #333; border-top: 0; font-family: "Liberation Sans", sans-serif; font-size: 20px; line-height: 40px; padding-left: 10px; color: #333; }
```

FILE: map.js
```js
// Turn the traced contour point lists into smooth curves.
document.querySelectorAll('.map polyline').forEach(function (line) {
  var p = line.getAttribute('points').trim().split(/\s+/).map(function (s) {
    return s.split(',').map(Number);
  });
  var d = 'M' + p[0].join(' ');
  for (var i = 1; i < p.length - 1; i++) {
    var mx = (p[i][0] + p[i + 1][0]) / 2;
    var my = (p[i][1] + p[i + 1][1]) / 2;
    d += 'Q' + p[i].join(' ') + ' ' + mx + ' ' + my;
  }
  d += 'L' + p[p.length - 1].join(' ');
  var path = document.createElementNS('http://www.w3.org/2000/svg', 'path');
  path.setAttribute('class', line.getAttribute('class'));
  path.setAttribute('d', d);
  line.replaceWith(path);
});
```
